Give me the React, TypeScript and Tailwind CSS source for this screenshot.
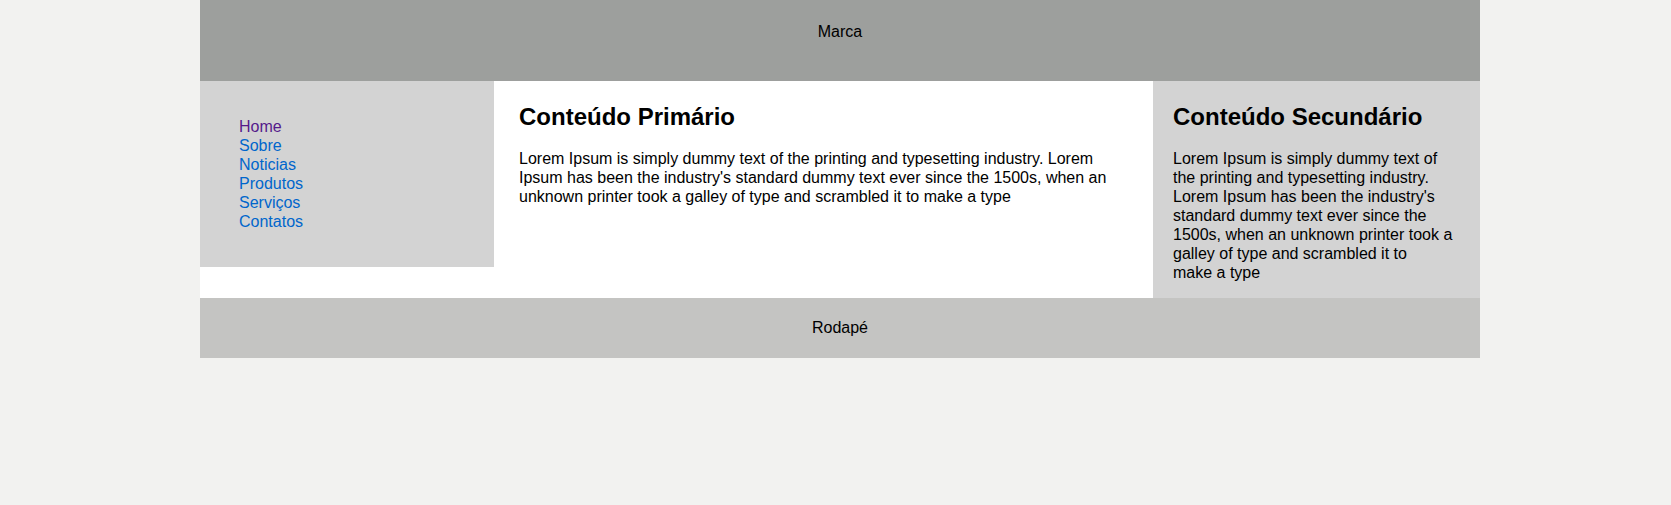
export default function App() {
  return (
    <div className="min-h-screen bg-[#f2f2f0] font-['Liberation_Sans',Arial,sans-serif] text-[16px] text-black">
      <div className="ml-[200px] w-[1280px] bg-white">
        <header className="h-[81px] bg-[#9d9f9d] pt-[22px] text-center leading-[19px]">
          Marca
        </header>

        <div className="flex items-start">
          <nav className="w-[294px] shrink-0 bg-[#d3d3d3] py-[20px]">
            <ul className="my-4 pl-[39px] leading-[19px]">
              <li>
                <a href="#" className="text-[#551a8b]">Home</a>
              </li>
              <li>
                <a href="#" className="text-[#0066cc]">Sobre</a>
              </li>
              <li>
                <a href="#" className="text-[#0066cc]">Noticias</a>
              </li>
              <li>
                <a href="#" className="text-[#0066cc]">Produtos</a>
              </li>
              <li>
                <a href="#" className="text-[#0066cc]">Serviços</a>
              </li>
              <li>
                <a href="#" className="text-[#0066cc]">Contatos</a>
              </li>
            </ul>
          </nav>

          <main className="w-[659px] shrink-0 px-[25px] pt-[22px]">
            <h2 className="mb-[18px] text-[24px] font-bold leading-[28px]">Conteúdo Primário</h2>
            <p className="leading-[19px]">
              Lorem Ipsum is simply dummy text of the printing and typesetting industry. Lorem Ipsum has been
              the industry's standard dummy text ever since the 1500s, when an unknown printer took a galley of
              type and scrambled it to make a type
            </p>
          </main>

          <aside className="w-[327px] shrink-0 bg-[#d3d3d3] px-[20px] pt-[22px] pb-[16px]">
            <h2 className="mb-[18px] text-[24px] font-bold leading-[28px]">Conteúdo Secundário</h2>
            <p className="leading-[19px]">
              Lorem Ipsum is simply dummy text of the printing and typesetting industry. Lorem Ipsum has been
              the industry's standard dummy text ever since the 1500s, when an unknown printer took a galley of
              type and scrambled it to
              <br />
              make a type
            </p>
          </aside>
        </div>

        <footer className="h-[60px] bg-[#c4c4c2] pt-[20px] text-center leading-[19px]">
          Rodapé
        </footer>
      </div>
    </div>
  );
}
